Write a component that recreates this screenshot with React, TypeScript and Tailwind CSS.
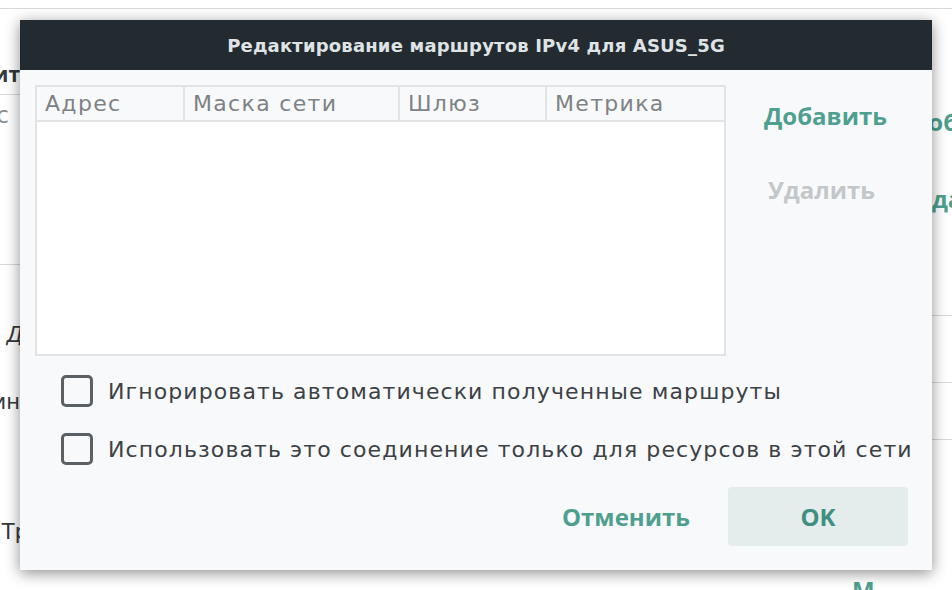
import React from "react";

const font = { fontFamily: '"DejaVu Sans", "Noto Sans", sans-serif' };
const boldFont = { fontFamily: '"Open Sans", "Noto Sans", sans-serif' };

const columns = [
    { label: "Адрес", w: "w-[148px]" },
    { label: "Маска сети", w: "w-[215px]" },
    { label: "Шлюз", w: "w-[147px]" },
    { label: "Метрика", w: "flex-1" },
];

const Checkbox = ({ label }: { label: string }) => (
    <label className="flex items-center gap-[15px] h-[32px]">
        <span className="w-[32px] h-[32px] rounded-[5px] border-[3px] border-[#5b6064] bg-[#f8f9fb] shrink-0" />
        <span className="text-[22px] tracking-[0.05em] text-[#3c4145] whitespace-nowrap">{label}</span>
    </label>
);

const App = () => {
    return (
        <div className="relative w-[952px] h-[590px] overflow-hidden bg-white" style={font}>
            {/* page behind the dialog */}
            <div className="flex h-full border-t border-[#d8d8d8] mt-[8px]">
                <div className="w-[20px] flex flex-col text-[#33383b] text-[21px]">
                    <div className="flex justify-end overflow-hidden whitespace-nowrap font-bold h-[28px] mt-[50px]" style={boldFont}>Маршрутизация ит</div>
                    <div className="border-b border-[#d8d8d8] mt-[7px]" />
                    <div className="flex justify-end overflow-hidden whitespace-nowrap text-[#8a8f92] text-[23px] h-[28px] mt-[3px] mr-[11px]">Адрес</div>
                    <div className="border-b border-[#d8d8d8] mt-[138px]" />
                    <div className="flex justify-end overflow-hidden whitespace-nowrap italic h-[28px] mt-[55px] -mr-[3px]">Д</div>
                    <div className="flex justify-end overflow-hidden whitespace-nowrap h-[28px] mt-[39px]">Один</div>
                    <div className="flex justify-end overflow-hidden whitespace-nowrap h-[28px] mt-[102px] -mr-[8px]">Тр</div>
                </div>
                <div className="w-[912px] flex flex-col">
                    <div className="mt-[569px] ml-[832px] text-[24px] font-bold text-[#4f9f8f] leading-none" style={boldFont}>М</div>
                </div>
                <div className="w-[20px] overflow-hidden flex flex-col text-[24px] font-bold text-[#4f9f8f]" style={boldFont}>
                    <div className="whitespace-nowrap h-[30px] mt-[95px] -ml-[22px]">Добавить</div>
                    <div className="whitespace-nowrap h-[30px] mt-[47px] -ml-[16px]">Удалить</div>
                    <div className="border-b border-[#d8d8d8] mt-[104px]" />
                    <div className="border-b border-[#d8d8d8] mt-[66px]" />
                    <div className="border-b border-[#d8d8d8] mt-[56px]" />
                </div>
            </div>

            {/* dialog */}
            <div className="absolute top-[20px] left-[20px] w-[912px] h-[550px] bg-[#f8f9fb] flex flex-col shadow-[0_3px_14px_rgba(0,0,0,0.45)]">
                <div className="h-[50px] bg-[#232b30] flex items-center justify-center text-[#dfe3e6] text-[18px] tracking-[0.01em] font-bold">
                    Редактирование маршрутов IPv4 для ASUS_5G
                </div>
                <div className="flex flex-1 flex-col px-[15px] pt-[15px] pb-[24px]">
                    <div className="flex">
                        <div className="w-[691px] h-[271px] border-2 border-[#e1e3e5] bg-white flex flex-col">
                            <div className="flex h-[35px] bg-[#f8f9fb] border-b-2 border-[#e1e3e5]">
                                {columns.map((c, i) => (
                                    <div
                                        key={c.label}
                                        className={`${c.w} flex items-center px-[8px] text-[22px] tracking-[0.06em] text-[#7d8285] ${i < 3 ? "border-r-2 border-[#e1e3e5]" : ""}`}
                                    >
                                        {c.label}
                                    </div>
                                ))}
                            </div>
                        </div>
                        <div className="flex-1 flex flex-col items-center pt-[13px] gap-[42px] text-[24px] font-bold" style={boldFont}>
                            <button className="text-[#4f9f8f] h-[32px] ml-[8px]">Добавить</button>
                            <button className="text-[#c3c7ca] h-[32px]">Удалить</button>
                        </div>
                    </div>
                    <div className="flex flex-col gap-[26px] mt-[19px] pl-[26px]">
                        <Checkbox label="Игнорировать автоматически полученные маршруты" />
                        <Checkbox label="Использовать это соединение только для ресурсов в этой сети" />
                    </div>
                    <div className="flex-1" />
                    <div className="flex justify-end items-center gap-[38px] pr-[9px] text-[24px] font-bold" style={boldFont}>
                        <button className="text-[#4f9f8f]">Отменить</button>
                        <button className="w-[180px] h-[59px] rounded-[4px] bg-[#e4ecec] text-[#3f8f80]">OK</button>
                    </div>
                </div>
            </div>
        </div>
    );
};

export default App;
